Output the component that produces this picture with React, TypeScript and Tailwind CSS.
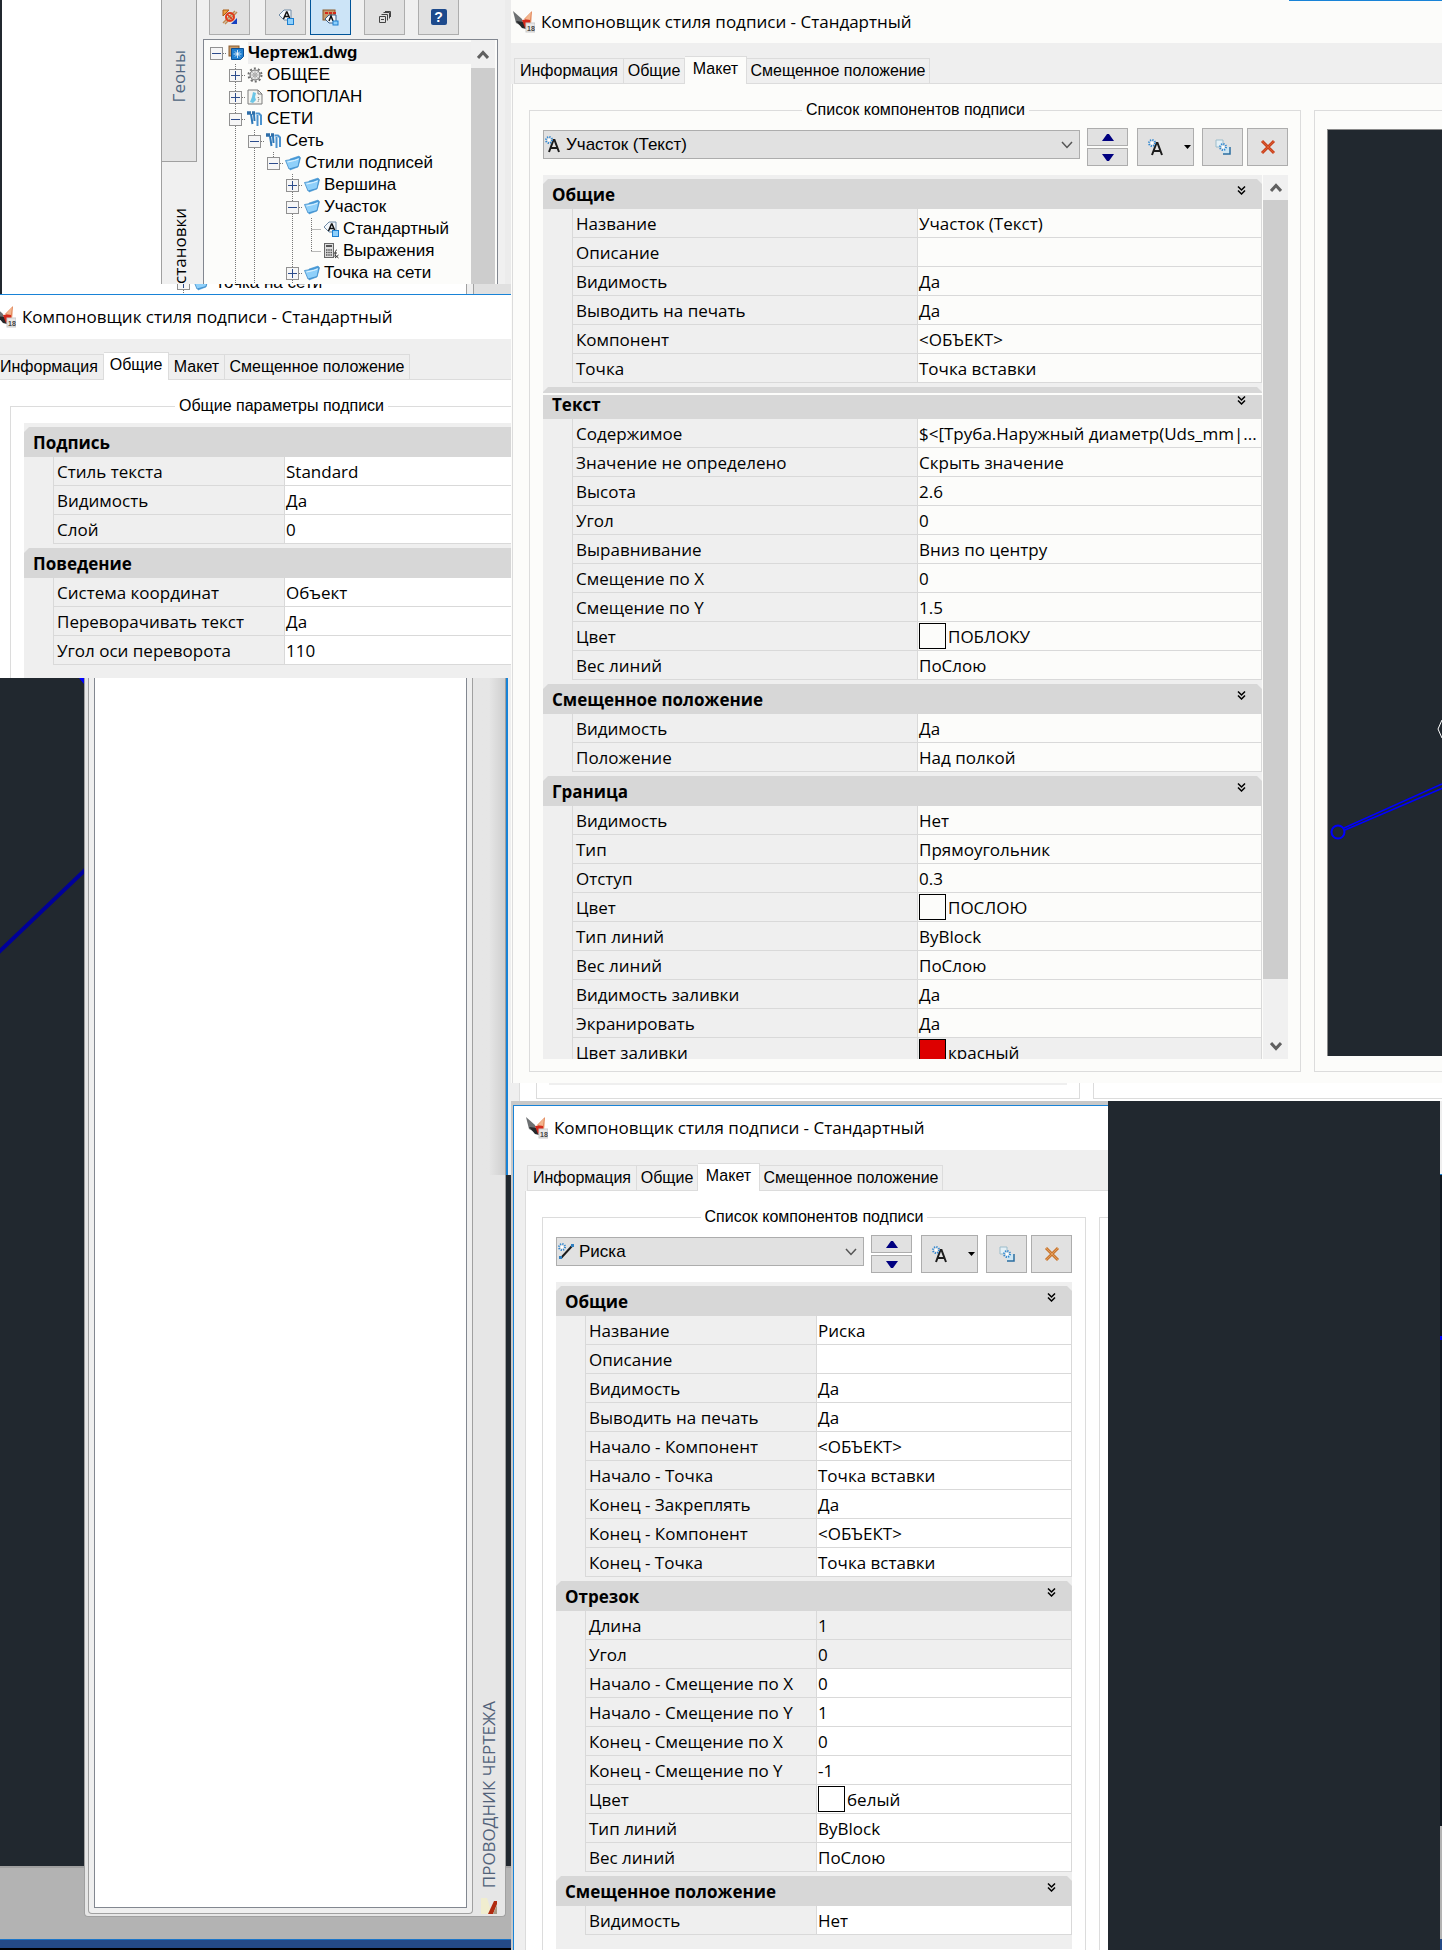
import type { ReactNode } from 'react'

type Row = { label: string; value?: string; swatch?: 'empty' | 'red'; locked?: boolean }

const SEGOE = "font-['Open_Sans','Noto_Sans',sans-serif]"
const ARIAL = "font-['Liberation_Sans',Arial,sans-serif]"

const LABEL_ROWS: Row[] = [
  { label: 'Стиль текста', value: 'Standard' },
  { label: 'Видимость', value: 'Да' },
  { label: 'Слой', value: '0' },
]

const BEHAVIOUR_ROWS: Row[] = [
  { label: 'Система координат', value: 'Объект' },
  { label: 'Переворачивать текст', value: 'Да' },
  { label: 'Угол оси переворота', value: '110' },
]

const PIPE_GENERAL: Row[] = [
  { label: 'Название', value: 'Участок (Текст)' },
  { label: 'Описание' },
  { label: 'Видимость', value: 'Да' },
  { label: 'Выводить на печать', value: 'Да' },
  { label: 'Компонент', value: '<ОБЪЕКТ>' },
  { label: 'Точка', value: 'Точка вставки' },
]

const PIPE_TEXT: Row[] = [
  { label: 'Содержимое', value: '$<[Труба.Наружный диаметр(Uds_mm|...' },
  { label: 'Значение не определено', value: 'Скрыть значение' },
  { label: 'Высота', value: '2.6' },
  { label: 'Угол', value: '0' },
  { label: 'Выравнивание', value: 'Вниз по центру' },
  { label: 'Смещение по X', value: '0' },
  { label: 'Смещение по Y', value: '1.5' },
  { label: 'Цвет', value: 'ПОБЛОКУ', swatch: 'empty' },
  { label: 'Вес линий', value: 'ПоСлою' },
]

const PIPE_OFFSET: Row[] = [
  { label: 'Видимость', value: 'Да' },
  { label: 'Положение', value: 'Над полкой' },
]

const PIPE_BORDER: Row[] = [
  { label: 'Видимость', value: 'Нет' },
  { label: 'Тип', value: 'Прямоугольник' },
  { label: 'Отступ', value: '0.3' },
  { label: 'Цвет', value: 'ПОСЛОЮ', swatch: 'empty' },
  { label: 'Тип линий', value: 'ByBlock' },
  { label: 'Вес линий', value: 'ПоСлою' },
  { label: 'Видимость заливки', value: 'Да' },
  { label: 'Экранировать', value: 'Да' },
  { label: 'Цвет заливки', value: 'красный', swatch: 'red', locked: true },
]

const TICK_GENERAL: Row[] = [
  { label: 'Название', value: 'Риска' },
  { label: 'Описание' },
  { label: 'Видимость', value: 'Да' },
  { label: 'Выводить на печать', value: 'Да' },
  { label: 'Начало - Компонент', value: '<ОБЪЕКТ>' },
  { label: 'Начало - Точка', value: 'Точка вставки' },
  { label: 'Конец - Закреплять', value: 'Да' },
  { label: 'Конец - Компонент', value: '<ОБЪЕКТ>' },
  { label: 'Конец - Точка', value: 'Точка вставки' },
]

const TICK_SEGMENT: Row[] = [
  { label: 'Длина', value: '1', locked: true },
  { label: 'Угол', value: '0', locked: true },
  { label: 'Начало - Смещение по X', value: '0' },
  { label: 'Начало - Смещение по Y', value: '1' },
  { label: 'Конец - Смещение по X', value: '0' },
  { label: 'Конец - Смещение по Y', value: '-1' },
  { label: 'Цвет', value: 'белый', swatch: 'empty' },
  { label: 'Тип линий', value: 'ByBlock' },
  { label: 'Вес линий', value: 'ПоСлою' },
]

/* ---------- icons ---------- */

function AppIcon() {
  return (
    <svg width="22" height="22" viewBox="0 0 22 22" className="shrink-0">
      <path d="M0 0l9 8 2 8-8-4z" fill="#6d7072" />
      <path d="M3 10l8 1 2 7-4-1z" fill="#25282b" />
      <path d="M19 0l-1 14-7-6z" fill="#e2875a" />
      <path d="M9 9l8-1 0 5-5 4z" fill="#d42a1c" />
      <path d="M18 1l-6 7 5 1z" fill="#f3b58d" />
      <rect x="13" y="12" width="9" height="9" fill="#e8e8e8" stroke="#c9c9c9" />
      <text x="14" y="20" fontSize="7" fontWeight="bold" fill="#444" className={ARIAL}>18</text>
    </svg>
  )
}

function Burst() {
  return (
    <>
      <circle cx="4" cy="4" r="3" stroke="#2f86d0" strokeWidth="2" strokeDasharray="1.200 1.150" />
      <circle cx="4" cy="4" r="1.500" fill="#fff" />
    </>
  )
}

function TextIcon() {
  return (
    <svg width="16" height="17" viewBox="0 0 16 17" fill="none" className="shrink-0">
      <path d="M4 16L8.500 4h1L14 16M6 12h6.500" stroke="#1c1c1c" strokeWidth="2" />
      <Burst />
    </svg>
  )
}

function TickIcon() {
  return (
    <svg width="16" height="17" viewBox="0 0 16 17" fill="none">
      <path d="M3 15L14 3" stroke="#1c1c1c" strokeWidth="2" />
      <rect x="1" y="13" width="3" height="3" fill="#2f7fc1" />
      <rect x="13" y="1" width="3" height="3" fill="#2f7fc1" />
      <Burst />
    </svg>
  )
}

function CopyIcon() {
  return (
    <svg width="16" height="16" viewBox="0 0 16 16" fill="none">
      <path d="M1 1h7v7H1z" fill="#e4f0f6" stroke="#9bbccb" />
      <path d="M8 8h7v7H8z" fill="#cfe6f2" />
      <path d="M15 8v7H8" stroke="#2b6ea0" strokeWidth="1.500" />
      <g transform="translate(4 4)"><Burst /></g>
    </svg>
  )
}

function CrossIcon({ muted }: { muted?: boolean }) {
  return (
    <svg width="16" height="16" viewBox="0 0 16 16" fill="none">
      <path d="M2 2l12 12M14 2L2 14" stroke={muted ? '#c9762f' : '#c8401c'} strokeWidth="3" />
      <path d="M2 2l12 12M14 2L2 14" stroke={muted ? '#e09a58' : '#dc5a2e'} strokeWidth="1" />
    </svg>
  )
}

function DoubleChevron() {
  return (
    <svg width="9" height="9" viewBox="0 0 9 9" fill="none" stroke="#000" strokeWidth="1.500">
      <path d="M1 0.500L4.500 4 8 0.500M1 4.500L4.500 8 8 4.500" />
    </svg>
  )
}

function ScrollArrow({ down }: { down?: boolean }) {
  return (
    <svg width="12" height="9" viewBox="0 0 12 9" fill="none" stroke="#606060" strokeWidth="3">
      <path d={down ? 'M1 1l5 5.500 5-5.500' : 'M1 8l5-5.500L11 8'} />
    </svg>
  )
}

function LabelStyleIcon() {
  return (
    <svg width="16" height="16" viewBox="0 0 16 16" fill="none">
      <path d="M1 6l5-5h7v10H6z" fill="#f2f6fa" stroke="#6f8aa5" />
      <path d="M5.500 10L8.500 3h0.500L12 10M7 7.500h4" stroke="#111" strokeWidth="1.500" />
      <rect x="9.500" y="9.500" width="6" height="6" fill="#8fd0fb" stroke="#1d7fd0" />
    </svg>
  )
}

function FolderIcon() {
  return (
    <svg width="16" height="16" viewBox="0 0 16 16" fill="none">
      <path d="M5 4l9-3 1.500 2L13 12l-8 3z" fill="#4aa0e0" stroke="#3d8cc9" strokeWidth="0.500" />
      <path d="M0.500 5.500l9-1.500L15 2l-2 9.500L4 14z" fill="#8fd0fa" stroke="#3d8cc9" strokeWidth="0.800" />
      <path d="M2.500 7l7-1.500 4-1.500" stroke="#e3f5ff" />
    </svg>
  )
}

function GearIcon() {
  return (
    <svg width="16" height="16" viewBox="0 0 16 16" fill="none" stroke="#6e6e6e">
      <circle cx="8" cy="8" r="5" fill="#e4e4e4" strokeWidth="1" />
      <circle cx="8" cy="8" r="6.500" strokeWidth="2" strokeDasharray="2 2.100" />
      <path d="M8 4.500v7M4.500 8h7M5.500 5.500l5 5M10.500 5.500l-5 5" strokeWidth="0.500" />
      <circle cx="8" cy="8" r="1" fill="#fff" strokeWidth="0.500" />
    </svg>
  )
}

function MapIcon() {
  return (
    <svg width="16" height="16" viewBox="0 0 16 16" fill="none">
      <path d="M1 1h10l4 4v10H1z" fill="#f4f4f0" stroke="#7c7c7c" />
      <path d="M6 3l3 1-1 4 1 3-3 3-3-1 2-5z" fill="#6cc6e6" />
      <path d="M11 1v4h4" stroke="#7c7c7c" />
      <path d="M11 8l1 2-1 3" stroke="#555" strokeDasharray="1 1" />
    </svg>
  )
}

function PipesIcon() {
  return (
    <svg width="16" height="16" viewBox="0 0 16 16" fill="none">
      <path d="M0 2h4M5 2h3" stroke="#2f6ea8" strokeWidth="3.500" />
      <path d="M4 3l1.500 10M7 3l0.500 7" stroke="#2e78b8" strokeWidth="2" />
      <path d="M8.500 2.500h3.500l2 2V14M10.500 4v11" stroke="#4c93cf" strokeWidth="2" />
    </svg>
  )
}

function DrawingIcon() {
  return (
    <svg width="16" height="16" viewBox="0 0 16 16" fill="none">
      <rect x="1" y="1" width="10" height="10" fill="#c79a68" stroke="#8a5a2c" />
      <path d="M3.500 3.500h12v8l-3 3h-9z" fill="#1f7fd0" stroke="#0d4f92" />
      <path d="M9.500 5v8M5.500 9h8M7 6.500l5 5M12 6.500l-5 5" stroke="#fff" strokeWidth="0.800" />
    </svg>
  )
}

function CalcIcon() {
  return (
    <svg width="16" height="16" viewBox="0 0 16 16" fill="none">
      <rect x="1.500" y="0.500" width="9" height="14" fill="#ddd" stroke="#666" />
      <path d="M3 3h6" stroke="#555" strokeWidth="2" />
      <path d="M3 7h6M3 9.500h6M3 12h6" stroke="#555" strokeDasharray="1.500 0.750" strokeWidth="1.500" />
      <path d="M14 7c-2 0-1.500 2-2 7M11 10h3M12 12l3.500 3M15.500 12L12 15" stroke="#333" />
    </svg>
  )
}

/* ---------- shared pieces ---------- */

function TitleBar({ className = 'pl-3' }: { className?: string }) {
  return (
    <header className={`flex h-11 shrink-0 items-center gap-1.5 overflow-hidden ${className} ${SEGOE}`}>
      <AppIcon />
      <h2 className="text-[17px] leading-6 whitespace-nowrap text-black">Компоновщик стиля подписи - Стандартный</h2>
    </header>
  )
}

const TAB_WIDTHS = ['w-[110px]', 'w-[61px]', 'w-[62px]', 'w-[183px]']
const TABS = ['Информация', 'Общие', 'Макет', 'Смещенное положение']

function TabStrip({ active, widths = TAB_WIDTHS, page = 'bg-white', first = 'justify-center border-l' }: {
  active: number
  widths?: string[]
  page?: string
  first?: string
}) {
  return (
    <div role="tablist" className={`flex h-[41px] shrink-0 items-end border-b border-[#dcdcdc] bg-[#efefef] text-base text-black ${ARIAL}`}>
      {TABS.map((t, i) => (
        <button
          key={t}
          role="tab"
          aria-selected={i === active}
          className={`flex shrink-0 items-center whitespace-nowrap border-t border-r border-[#dcdcdc] ${widths[i]} ${i === 0 ? first : 'justify-center'} ${
            i === active ? `-mb-px h-7 pb-1 ${page}` : 'h-[25px]'
          }`}
        >
          {t}
        </button>
      ))}
    </div>
  )
}

function Section({ title, rows, labelCol, page = 'bg-white', chevron = true }: {
  title: string
  rows: Row[]
  labelCol: string
  page?: string
  chevron?: boolean
}) {
  return (
    <section className={`text-[17px] leading-6 text-black ${SEGOE}`}>
      <button className="flex h-[30px] w-full items-center justify-between bg-[#d7d7d7] pr-4 pl-[9px] font-bold [clip-path:polygon(5px_0,calc(100%-5px)_0,100%_5px,100%_100%,0_100%,0_5px)]">
        <span className="pt-px">{title}</span>
        {chevron && <span className="mb-2"><DoubleChevron /></span>}
      </button>
      {rows.length > 0 && (
        <div className="pl-[29px]">
          <table className="w-full table-fixed border-separate border-spacing-0 border-r border-l border-[#d9d9d9]">
            <tbody>
              {rows.map((r) => (
                <tr key={r.label} className="h-[29px]">
                  <th scope="row" className={`border-b border-[#d9d9d9] p-0 pt-px pl-[3px] text-left font-normal whitespace-nowrap ${labelCol}`}>
                    {r.label}
                  </th>
                  <td className={`border-b border-l border-[#d9d9d9] p-0 pl-px ${r.locked ? 'bg-[#efefef]' : page}`}>
                    <div className="flex h-7 items-center gap-0.5 whitespace-nowrap">
                      {r.swatch && (
                        <span className={`h-[26px] w-[27px] shrink-0 border border-black ${r.swatch === 'red' ? 'bg-[#dd0000]' : page}`} />
                      )}
                      <span className="pt-px">{r.value}</span>
                    </div>
                  </td>
                </tr>
              ))}
            </tbody>
          </table>
        </div>
      )}
    </section>
  )
}

function ToolButton({ label, className, children }: { label: string; className: string; children: ReactNode }) {
  return (
    <button aria-label={label} className={`flex shrink-0 items-center justify-center border border-[#adadad] bg-[#e1e1e1] ${className}`}>
      {children}
    </button>
  )
}

function ComponentToolbar({ name, icon, muted }: { name: string; icon: ReactNode; muted?: boolean }) {
  return (
    <div className="flex items-start">
      <label className="relative mt-0.5 block min-w-0 flex-1">
        <span className="sr-only">Компонент подписи</span>
        <select className={`block h-[29px] w-full appearance-none border border-[#adadad] bg-[#e1e1e1] pl-[22px] text-[17px] text-black ${ARIAL}`}>
          <option>{name}</option>
        </select>
        <span className="pointer-events-none absolute top-1.5 left-0.5">{icon}</span>
        <svg width="12" height="8" viewBox="0 0 12 8" fill="none" stroke="#555" strokeWidth="1.500" className="pointer-events-none absolute top-[11px] right-[7px]">
          <path d="M1 1l5 5.500 5-5.500" />
        </svg>
      </label>
      <div className="ml-[7px] flex flex-col gap-0.5">
        <ToolButton label="Вверх" className="h-[18px] w-[41px]">
          <svg width="12" height="7" viewBox="0 0 12 7"><path d="M0 7l5-7h2l5 7z" fill="#000080" /></svg>
        </ToolButton>
        <ToolButton label="Вниз" className="h-[18px] w-[41px]">
          <svg width="12" height="7" viewBox="0 0 12 7"><path d="M0 0l5 7h2l5-7z" fill="#000080" /></svg>
        </ToolButton>
      </div>
      <ToolButton label="Добавить компонент" className="ml-[9px] h-[38px] w-[57px] gap-5 pl-2">
        <TextIcon />
        <svg width="7" height="4" viewBox="0 0 7 4" className="shrink-0"><path d="M0 0h7L3.500 4z" fill="#000" /></svg>
      </ToolButton>
      <ToolButton label="Копировать" className="ml-2 h-[38px] w-[41px]"><CopyIcon /></ToolButton>
      <ToolButton label="Удалить" className="ml-1 h-[38px] w-[41px]"><CrossIcon muted={muted} /></ToolButton>
    </div>
  )
}

function Group({ legend, className, children }: { legend: string; className: string; children: ReactNode }) {
  return (
    <fieldset className={`min-w-0 border border-[#dcdcdc] ${className}`}>
      <legend className={`mx-auto px-1 text-base leading-[22px] text-black ${ARIAL}`}>{legend}</legend>
      {children}
    </fieldset>
  )
}

/* ---------- explorer tree ---------- */

// one guide letter per level: "|" line, " " gap, "+"/"-" expander, "L"/"E" leaf joints
const TREE: { guides: string; label: string; icon: ReactNode; root?: boolean }[] = [
  { guides: '-', label: 'Чертеж1.dwg', icon: <DrawingIcon />, root: true },
  { guides: ' +', label: 'ОБЩЕЕ', icon: <GearIcon /> },
  { guides: ' +', label: 'ТОПОПЛАН', icon: <MapIcon /> },
  { guides: ' -', label: 'СЕТИ', icon: <PipesIcon /> },
  { guides: ' |-', label: 'Сеть', icon: <PipesIcon /> },
  { guides: ' ||_', label: 'Стили подписей', icon: <FolderIcon /> },
  { guides: ' || +', label: 'Вершина', icon: <FolderIcon /> },
  { guides: ' || -', label: 'Участок', icon: <FolderIcon /> },
  { guides: ' || |L', label: 'Стандартный', icon: <LabelStyleIcon /> },
  { guides: ' || |E', label: 'Выражения', icon: <CalcIcon /> },
  { guides: ' || +', label: 'Точка на сети', icon: <FolderIcon /> },
]

const GUIDE_PATHS: Record<string, string> = {
  '|': 'M9.500 0v22',
  '+': 'M9.500 0v22M16 11.500h3',
  '-': 'M9.500 0v22M16 11.500h3',
  _: 'M9.500 0v5M16 11.500h3',
  L: 'M9.500 0v22M9.500 11.500h10',
  E: 'M9.500 0v11M9.500 11.500h10',
}

function Guide({ kind, root }: { kind: string; root?: boolean }) {
  const boxed = kind === '+' || kind === '-' || kind === '_'
  return (
    <svg width="19" height="22" viewBox="0 0 19 22" fill="none" className="shrink-0">
      {GUIDE_PATHS[kind] && (
        <path d={root ? 'M16 11.500h3' : GUIDE_PATHS[kind]} stroke="#777" strokeDasharray="1 1" />
      )}
      {boxed && (
        <>
          <rect x="3.500" y="5.500" width="12" height="12" fill="#f6f6f6" stroke="#919191" />
          <path d={kind === '+' ? 'M5 11.500h9M9.500 7v9' : 'M5 11.500h9'} stroke="#2c4c8c" />
        </>
      )}
    </svg>
  )
}

function Tree() {
  return (
    <ul className={`min-w-0 flex-1 pt-0.5 pl-[3px] text-[17px] text-black ${ARIAL}`}>
      {TREE.map((n) => (
        <li key={n.label} className="flex h-[22px] items-center">
          {n.guides.split('').map((g, i) => <Guide key={i} kind={g} root={n.root} />)}
          <span className="ml-0.5 shrink-0">{n.icon}</span>
          <span className={`ml-1 pr-1 leading-[22px] whitespace-nowrap ${n.root ? 'flex-1 bg-[#efefef] font-bold' : ''}`}>{n.label}</span>
        </li>
      ))}
    </ul>
  )
}

function ExplorerToolbar() {
  const base = 'flex h-[35px] w-[41px] items-center justify-center border border-t-0'
  const plain = `${base} border-[#adadad] bg-[#e1e1e1]`
  return (
    <div className="flex h-[39px] items-start pl-3">
      <button aria-label="Связи" className={plain}>
        <svg width="16" height="16" viewBox="0 0 16 16" fill="none">
          <path d="M1 1h6L1 7z" fill="#f0a040" stroke="#a85a10" />
          <path d="M15 15H9l6-6z" fill="#1540c0" />
          <path d="M1 14L13 2M3 15L15 3" stroke="#c08a50" strokeWidth="1.500" />
          <circle cx="8" cy="8" r="4" stroke="#e03a1a" strokeWidth="2" />
          <path d="M5 5l6 6" stroke="#e03a1a" strokeWidth="1.500" />
        </svg>
      </button>
      <button aria-label="Стиль подписи" className={`ml-[15px] ${plain}`}><LabelStyleIcon /></button>
      <button aria-label="Стили чертежа" className={`ml-1 border-[#005499] bg-[#cce4f7] ${base}`}>
        <svg width="17" height="17" viewBox="0 0 17 17" fill="none">
          <rect x="1" y="1" width="12" height="10" fill="#c79a68" stroke="#8a5a2c" />
          <path d="M3 4h11" stroke="#d42a1c" strokeWidth="2" strokeDasharray="3 1" />
          <path d="M3 10l4-4h7v8H7z" fill="#f2f6fa" stroke="#3a5f8a" />
          <path d="M7 12l2-5 2 5" stroke="#111" strokeWidth="1.500" />
          <rect x="11" y="12" width="5" height="4" fill="#8fd0fb" stroke="#1d7fd0" />
        </svg>
      </button>
      <button aria-label="Свернуть все" className={`ml-[13px] ${plain}`}>
        <svg width="12" height="12" viewBox="0 0 12 12" fill="none" stroke="#444">
          <path d="M0.500 5.500h6v6h-6zM2 8.500h3M2.500 3.500h6v6M4.500 1.500h6v6M6 0.500h5.500V6" />
        </svg>
      </button>
      <button aria-label="Справка" className={`ml-[13px] ${plain}`}>
        <span className={`flex size-4 items-center justify-center rounded-xs bg-[#1d4a8c] text-sm font-bold text-white ${ARIAL}`}>?</span>
      </button>
    </div>
  )
}

function Explorer() {
  return (
    <div className="flex h-[284px] overflow-hidden bg-white">
      <div className="w-0.5 bg-[#21282f]" />
      <div className="flex-1" />
      <div className={`flex w-9 flex-col border-l border-[#a0a0a0] bg-[#f0f0f0] text-[17px] ${SEGOE}`}>
        <button className="flex h-[167px] items-center justify-center border-r border-b border-[#a0a0a0] bg-[#e4e4e4] pb-2 text-[#4f6580]">
          <span className="rotate-180 [writing-mode:vertical-rl]">Геоны</span>
        </button>
        <button className="mt-[46px] flex justify-center text-black">
          <span className="rotate-180 [writing-mode:vertical-rl]">становки</span>
        </button>
      </div>
      <div className="flex w-[308px] flex-col bg-[#f0f0f0]">
        <ExplorerToolbar />
        <div className="mr-[7px] ml-1.5 flex flex-1 border border-b-0 border-[#828790] bg-[#fcfcfa]">
          <Tree />
          <div className="mr-0.5 w-6 bg-[#cdcdcd]">
            <button aria-label="Прокрутить вверх" className="flex h-7 w-full items-center justify-center bg-[#f0f0f0]"><ScrollArrow /></button>
          </div>
        </div>
      </div>
      <div className="w-1.5 bg-[#ececec]" />
    </div>
  )
}

/* ---------- windows ---------- */

function CommonWindow() {
  return (
    <div className="flex h-[384px] flex-col overflow-hidden border-t border-[#1883d7] bg-white">
      <TitleBar className="-ml-1.5" />
      <TabStrip active={1} widths={['w-[104px]', 'w-[65px]', 'w-14', 'w-[185px]']} first="justify-start" />
      <div className="flex min-h-0 flex-1 pt-[15px] pl-2.5">
        <Group legend="Общие параметры подписи" className="w-[546px] shrink-0 border-b-0 pt-1.5 pr-4 pl-[13px]">
          <div className="flex h-64 flex-col gap-1 bg-[#efefef] pt-1">
            <Section title="Подпись" rows={LABEL_ROWS} labelCol="w-[230px]" chevron={false} />
            <Section title="Поведение" rows={BEHAVIOUR_ROWS} labelCol="w-[230px]" chevron={false} />
          </div>
        </Group>
      </div>
    </div>
  )
}

function DrawingArea() {
  return (
    <div className="relative flex flex-1 flex-col bg-[#21282f]">
      <svg width="84" height="290" viewBox="0 0 84 290" fill="none">
        <path d="M79 0h5v6z" fill="#0000ff" />
        <path d="M-2 275L86 191" stroke="#00009a" strokeWidth="4" />
      </svg>
      <div className="flex-1" />
      <div className="h-[73px] border-t-2 border-[#a0a0a0] bg-[#b3b3b3]" />
      <div className="h-[9px] border-t border-[#1c75c8] bg-[#244a86]" />
      <div className="h-0.5 bg-black" />

      {/* docked explorer palette floating over the canvas */}
      <div className="absolute top-0 bottom-[33px] left-[84px] flex w-[422px] rounded-b-sm border border-t-0 border-[#a0a0a0] bg-[#e6e6e6] pb-0.5 pl-[3px]">
        <div className="flex flex-1 rounded-b-sm border border-t-0 border-[#a0a0a0] bg-[#efefef] px-[5px] pb-[5px]">
          <div className="flex-1 border border-t-0 border-[#828790] bg-white" />
        </div>
        <div className="flex w-8 flex-col items-center">
          <div className="h-[497px] w-full bg-linear-to-r from-[#e6e6e6] from-50% to-[#cfcfcf]" />
          <div className="flex-1" />
          <span className={`rotate-180 text-[17px] whitespace-nowrap text-[#52627a] [writing-mode:vertical-rl] ${SEGOE}`}>ПРОВОДНИК ЧЕРТЕЖА</span>
          <svg width="16" height="16" viewBox="0 0 16 16" className="mt-2.5">
            <path d="M0 0h6l5 16H0z" fill="#f0edcf" />
            <path d="M7 16l6-13h3v3l-4 10z" fill="#b02a10" />
            <path d="M12 16l4-9v9z" fill="#a99a84" />
          </svg>
        </div>
      </div>
      <div className="absolute top-0 right-0 h-[497px] w-[5px] border-l-2 border-[#1883d7] bg-[#efefef]" />
    </div>
  )
}

function PipeWindow() {
  const page = 'bg-[#fcfcfa]'
  const col = 'w-[344px]'
  return (
    <div className="bg-[#fcfcfa]">
      <div className="flex h-[43px] justify-between">
        <TitleBar className="pl-0.5" />
        <div className="w-[153px] border-t border-[#1883d7]" />
      </div>
      <div className="bg-[#efefef] pl-[3px]">
        <TabStrip active={2} page={page} />
      </div>
      <div className="ml-px flex border-l border-[#dcdcdc] pt-[15px] pb-[11px] pl-4">
        <Group legend="Список компонентов подписи" className="flex-1 pt-[7px] pr-3 pb-3 pl-[13px]">
          <ComponentToolbar name="Участок (Текст)" icon={<TextIcon />} />
          <div className="mt-[9px] flex">
            <div className="flex min-w-0 flex-1 flex-col gap-0.5">
              <div className="flex h-[218px] flex-col gap-1 overflow-hidden bg-[#efefef] pt-1">
                <Section title="Общие" rows={PIPE_GENERAL} labelCol={col} page={page} />
                <Section title="" rows={[]} labelCol={col} chevron={false} />
              </div>
              <div className="h-[664px] overflow-hidden bg-[#efefef]">
                <div className="-mt-1.5 flex flex-col gap-1">
                  <Section title="Текст" rows={PIPE_TEXT} labelCol={col} page={page} />
                  <Section title="Смещенное положение" rows={PIPE_OFFSET} labelCol={col} page={page} />
                  <Section title="Граница" rows={PIPE_BORDER} labelCol={col} page={page} />
                </div>
              </div>
            </div>
            <div className="ml-px flex w-[25px] flex-col bg-[#f0f0f0]">
              <button aria-label="Прокрутить вверх" className="flex h-[25px] items-center justify-center"><ScrollArrow /></button>
              <div className="flex-1 bg-[#cdcdcd]" />
              <button aria-label="Прокрутить вниз" className="flex h-20 items-end justify-center pb-2"><ScrollArrow down /></button>
            </div>
          </div>
        </Group>
        <div className="mt-[11px] ml-[13px] w-32 border border-r-0 border-[#dcdcdc] pt-[18px] pb-[15px] pl-3">
          <div className="h-full overflow-hidden border-t border-l border-[#8a8a8a] bg-[#21282f]">
            <svg width="114" height="720" viewBox="0 0 114 720" fill="none">
              <path d="M16 698l98-44M17 700l98-42" stroke="#0000ff" strokeWidth="1.500" />
              <circle cx="10" cy="702" r="6.500" stroke="#0000ff" strokeWidth="2" />
              <path d="M114 590l-4 9 4 9" stroke="#fff" />
            </svg>
          </div>
        </div>
      </div>
    </div>
  )
}

// slice of the window underneath that shows between the two dialogs
function UnderlyingEdge() {
  return (
    <div className="flex h-[18px] bg-[#efefef] pl-2">
      <div className="flex flex-1 gap-[13px] border-l border-[#dcdcdc] bg-white pb-0.5 pl-4">
        <div className="w-[544px] border border-t-0 border-[#dcdcdc] px-3"><div className="h-0.5 bg-[#efefef]" /></div>
        <div className="flex-1 border-b border-l border-[#dcdcdc]" />
      </div>
    </div>
  )
}

function TickWindow() {
  const col = 'w-[230px]'
  return (
    <div className="flex flex-1 bg-[#21282f]">
      <div className="flex w-[597px] flex-col bg-[#c8c8c8] pt-1 pl-0.5">
        <div className="flex flex-1 flex-col overflow-hidden border-t border-l border-[#1883d7] bg-white">
          <TitleBar />
          <div className="bg-[#efefef] pl-[13px]">
            <TabStrip active={2} />
          </div>
          <div className="flex flex-1 bg-[#efefef] pl-[11px]">
            <div className="flex flex-1 border-l border-[#dcdcdc] bg-white pt-[15px] pl-4">
              <Group legend="Список компонентов подписи" className="flex-1 border-b-0 px-[13px] pt-[7px]">
                <ComponentToolbar name="Риска" icon={<TickIcon />} muted />
                <div className="mt-[9px] flex flex-col gap-1 bg-[#efefef] pt-1 pb-3.5">
                  <Section title="Общие" rows={TICK_GENERAL} labelCol={col} />
                  <Section title="Отрезок" rows={TICK_SEGMENT} labelCol={col} />
                  <Section title="Смещенное положение" rows={[{ label: 'Видимость', value: 'Нет' }]} labelCol={col} />
                </div>
              </Group>
              <div className="mt-[11px] ml-[13px] w-[9px] border-t border-l border-[#dcdcdc]" />
            </div>
          </div>
        </div>
      </div>
      <div className="flex-1" />
      <div className="flex w-0.5 flex-col bg-[#101820]">
        <div className="h-[74px] border-b border-[#1883d7] bg-[#efefef]" />
        <div className="mt-[161px] h-1 bg-[#0000ff]" />
        <div className="flex-1" />
        <div className="h-[113px] bg-[#b3b3b3]" />
        <div className="h-[11px] bg-[#244a86]" />
      </div>
    </div>
  )
}

export default function App() {
  return (
    <main className="flex min-h-screen bg-white">
      <div className="flex w-[511px] shrink-0 flex-col">
        <Explorer />
        <div className={`flex h-2.5 overflow-hidden bg-white text-[17px] leading-[22px] text-black ${ARIAL}`}>
          <div className="w-0.5 bg-[#21282f]" />
          <div className="-mt-3 ml-[172px] flex h-[22px] items-center">
            <Guide kind="+" />
            <FolderIcon />
            <span className="ml-1.5">Точка на сети</span>
          </div>
          <div className="flex-1" />
          <div className="w-2 border-x border-[#a0a0a0] bg-[#efefef]" />
          <div className="w-[37px] bg-[#e0e0e0]" />
        </div>
        <CommonWindow />
        <DrawingArea />
      </div>
      <div className="flex min-w-0 flex-1 flex-col">
        <PipeWindow />
        <UnderlyingEdge />
        <TickWindow />
      </div>
    </main>
  )
}
